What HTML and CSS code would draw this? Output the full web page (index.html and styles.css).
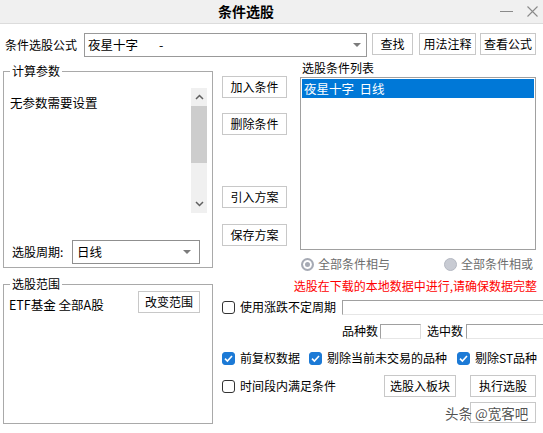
FILE: index.html
```html
<!DOCTYPE html>
<html lang="zh-CN">
<head>
<meta charset="utf-8">
<title>条件选股</title>
<link rel="stylesheet" href="styles.css">
</head>
<body>
<div class="titlebar">
  <span class="title">条件选股</span>
  <div class="tb-ctrls">
    <span class="tb-min"></span>
    <svg class="tb-close" width="11" height="11" viewBox="0 0 11 11"><path d="M0.5 0.5L10.5 10.5M10.5 0.5L0.5 10.5" stroke="#8a8a8a" stroke-width="1.1" fill="none"/></svg>
  </div>
</div>

<div class="toprow">
  <span class="top-label">条件选股公式</span>
  <div class="combo formula">
    <span class="combo-text">夜星十字</span><span class="dash">-</span>
    <span class="arrow"></span>
  </div>
  <button class="btn b-find">查找</button>
  <button class="btn b-note">用法注释</button>
  <button class="btn b-view">查看公式</button>
</div>

<div class="main">
  <div class="leftcol">
    <fieldset class="group g-params">
      <legend>计算参数</legend>
      <div class="params">
        <div class="params-text">无参数需要设置</div>
        <div class="vscroll">
          <span class="sb-btn"><svg width="9" height="6" viewBox="0 0 9 6"><path d="M1 5L4.5 1.5L8 5" stroke="#606060" stroke-width="1.5" fill="none"/></svg></span>
          <span class="sb-thumb"></span>
          <span class="sb-track"></span>
          <span class="sb-btn"><svg width="9" height="6" viewBox="0 0 9 6"><path d="M1 1L4.5 4.5L8 1" stroke="#606060" stroke-width="1.5" fill="none"/></svg></span>
        </div>
      </div>
      <div class="period">
        <span class="period-label">选股周期:</span>
        <div class="combo period-combo">
          <span class="combo-text">日线</span>
          <span class="arrow"></span>
        </div>
      </div>
    </fieldset>

    <fieldset class="group g-range">
      <legend>选股范围</legend>
      <div class="range">
        <span class="range-text">ETF基金 全部A股</span>
        <button class="btn b-range">改变范围</button>
      </div>
    </fieldset>
  </div>

  <div class="rightcol">
    <div class="upper">
      <div class="btncol">
        <button class="btn side b-add">加入条件</button>
        <button class="btn side b-del">删除条件</button>
        <button class="btn side b-imp">引入方案</button>
        <button class="btn side b-save">保存方案</button>
      </div>
      <div class="listcol">
        <div class="list-label">选股条件列表</div>
        <div class="listbox">
          <div class="item sel">夜星十字&nbsp;&nbsp;日线</div>
        </div>
        <div class="radios">
          <label class="radio-opt"><span class="radio on"></span><span>全部条件相与</span></label>
          <label class="radio-opt"><span class="radio"></span><span>全部条件相或</span></label>
        </div>
      </div>
    </div>

    <div class="warn">选股在下载的本地数据中进行,请确保数据完整</div>

    <div class="opt-row">
      <span class="cb"></span><span class="cb-text">使用涨跌不定周期</span>
      <span class="field f-period"></span>
    </div>

    <div class="count-row">
      <span class="lbl">品种数</span><span class="field f-count"></span>
      <span class="lbl lbl-sel">选中数</span><span class="field f-sel"></span>
    </div>

    <div class="check-row">
      <span class="cb on"><svg width="11" height="11" viewBox="0 0 11 11"><path d="M2 5.6L4.4 8L9 3" stroke="#fff" stroke-width="1.6" fill="none"/></svg></span><span class="cb-text">前复权数据</span>
      <span class="cb on c2"><svg width="11" height="11" viewBox="0 0 11 11"><path d="M2 5.6L4.4 8L9 3" stroke="#fff" stroke-width="1.6" fill="none"/></svg></span><span class="cb-text">剔除当前未交易的品种</span>
      <span class="cb on c3"><svg width="11" height="11" viewBox="0 0 11 11"><path d="M2 5.6L4.4 8L9 3" stroke="#fff" stroke-width="1.6" fill="none"/></svg></span><span class="cb-text">剔除ST品种</span>
    </div>

    <div class="action-row">
      <span class="cb"></span><span class="cb-text">时间段内满足条件</span>
      <button class="btn b-block">选股入板块</button>
      <button class="btn b-run">执行选股</button>
    </div>

    <div class="wm-row">
      <button class="btn b-hidden"></button>
      <span class="watermark">头条 @宽客吧</span>
    </div>
  </div>
</div>
</body>
</html>
```

FILE: styles.css
```css
* { box-sizing: border-box; }
html, body { margin: 0; padding: 0; }
body {
  width: 543px;
  height: 433px;
  overflow: hidden;
  background: #fff;
  color: #000;
  font-family: "Noto Sans CJK SC", "Noto Sans", sans-serif;
  font-size: 12px;
  line-height: 16px;
}

/* title bar */
.titlebar {
  height: 24px;
  background: #f0f0f0;
  border-bottom: 1px solid #dcdcdc;
  display: flex;
  align-items: center;
}
.title {
  margin-left: 218px;
  font-size: 14px;
  font-weight: bold;
  line-height: 23px;
}
.tb-ctrls {
  margin-left: auto;
  display: flex;
  align-items: center;
  gap: 14px;
  padding-right: 5px;
}
.tb-min { width: 13px; height: 1px; background: #8a8a8a; }
.tb-close { display: block; }

/* generic controls */
.btn {
  font-family: inherit;
  font-size: 12px;
  color: #000;
  background: #fff;
  border: 1px solid #c8c8c8;
  padding: 0;
  margin: 0;
  height: 22px;
  line-height: 20px;
  text-align: center;
  flex: none;
  white-space: nowrap;
}
.combo {
  display: flex;
  align-items: center;
  border: 1px solid #999;
  background: #fff;
  flex: none;
}
.arrow {
  margin-left: auto;
  width: 0;
  height: 0;
  border-left: 4px solid transparent;
  border-right: 4px solid transparent;
  border-top: 4px solid #7b7b7b;
}

/* top row */
.toprow {
  display: flex;
  align-items: flex-start;
  padding: 9px 0 0 5px;
  height: 36px;
}
.top-label { line-height: 23px; width: 72px; white-space: nowrap; }
.formula {
  margin-left: 7px;
  width: 283px;
  height: 24px;
  padding: 0 5px 0 3px;
  font-size: 12.5px;
}
.dash { margin-left: 21px; }
.b-find { margin-left: 5px; width: 41px; }
.b-note { margin-left: 6px; width: 57px; }
.b-view { margin-left: 4px; width: 56px; }

/* main */
.main {
  display: flex;
  padding-left: 3px;
  gap: 9px;
}
.leftcol { width: 210px; padding-top: 4px; flex: none; }

.group {
  margin: 0;
  padding: 0;
  border: 1px solid #a9a9a9;
  min-width: 0;
  width: 210px;
}
.group legend {
  margin-left: 6px;
  padding: 0 2px;
  font-size: 12px;
  line-height: 14px;
}

.params {
  display: flex;
  margin-top: 10px;
  height: 125px;
}
.params-text { flex: 1; padding: 7px 0 0 6px; font-size: 12.5px; }
.vscroll {
  width: 16px;
  margin-right: 5px;
  background: #f0f0f0;
  display: flex;
  flex-direction: column;
}
.sb-btn {
  height: 18px;
  display: flex;
  align-items: center;
  justify-content: center;
}
.sb-thumb { height: 57px; background: #cdcdcd; }
.sb-track { flex: 1; }

.period {
  display: flex;
  align-items: center;
  margin-top: 27px;
  padding: 0 0 3px 8px;
}
.period-label { width: 60px; white-space: nowrap; }
.period-combo {
  width: 128px;
  height: 24px;
  border-color: #8f8f8f;
  padding: 0 8px 0 4px;
  font-size: 12.5px;
}

.g-range { margin-top: 9px; }
.range {
  display: flex;
  align-items: flex-start;
  height: 132px;
  padding-left: 5px;
}
.range-text { padding-top: 6px; font-size: 12.5px; white-space: nowrap; }
.b-range { margin-left: auto; margin-right: 12px; width: 62px; }

/* right column */
.rightcol { flex: 1; min-width: 0; white-space: nowrap; }
.upper { display: flex; }
.btncol {
  width: 65px;
  display: flex;
  flex-direction: column;
  flex: none;
}
.side { width: 65px; }
.b-add { margin-top: 16px; }
.b-del { margin-top: 15px; }
.b-imp { margin-top: 51px; }
.b-save { margin-top: 16px; }

.listcol { margin-left: 13px; width: 236px; flex: none; }
.list-label { padding-left: 2px; height: 16px; }
.listbox {
  margin-top: 1px;
  height: 173px;
  border: 1px solid #a0a0a0;
  padding: 1px;
}
.item {
  height: 19px;
  line-height: 19px;
  padding-left: 2px;
  font-size: 12.5px;
}
.item.sel { background: #0078d7; color: #fff; }

.radios {
  height: 28px;
  display: flex;
  align-items: center;
  justify-content: space-between;
  padding: 0 3px 0 1px;
  color: #6d6d6d;
}
.radio-opt { display: flex; align-items: center; gap: 4px; }
.radio {
  width: 13px;
  height: 13px;
  border-radius: 50%;
  background: #c8cbd3;
  border: 1px solid #b4b8c2;
}
.radio.on {
  background: #fff;
  border: 2px solid #a6aab4;
  box-shadow: inset 0 0 0 2px #fff, inset 0 0 0 5px #a6aab4;
}

.warn {
  height: 16px;
  text-align: right;
  padding-right: 6px;
  color: #ff0000;
}

.cb {
  width: 13px;
  height: 13px;
  border: 1px solid #333;
  border-radius: 3px;
  background: #fff;
  flex: none;
  display: flex;
  align-items: center;
  justify-content: center;
}
.cb.on { background: #1c7ad6; border-color: #1c7ad6; }
.cb-text { margin-left: 5px; flex: none; }
.lbl { flex: none; }

.opt-row {
  height: 26px;
  display: flex;
  align-items: center;
}
.field {
  flex: none;
  border-top: 1px solid #a0a0a0;
  border-left: 1px solid #a0a0a0;
  border-right: 1px solid #dcdcdc;
  border-bottom: 1px solid #e6e6e6;
  background: #fff;
}
.f-period { margin-left: 6px; width: 220px; height: 15px; }

.count-row {
  height: 22px;
  display: flex;
  align-items: center;
  padding-left: 120px;
}
.f-count { margin-left: 2px; width: 41px; height: 15px; }
.lbl-sel { margin-left: 6px; }
.f-sel { margin-left: 3px; width: 90px; height: 15px; }

.check-row {
  height: 32px;
  display: flex;
  align-items: center;
}
.c2 { margin-left: 9px; }
.c3 { margin-left: 10px; }

.action-row {
  height: 24px;
  display: flex;
  align-items: center;
  padding-right: 7px;
}
.b-block { margin-left: auto; width: 72px; }
.b-run { margin-left: 14px; width: 66px; }

.wm-row {
  position: relative;
  height: 30px;
  display: flex;
  justify-content: flex-end;
  padding-right: 7px;
}
.b-hidden { margin-top: 4px; width: 66px; height: 21px; }
.watermark {
  position: absolute;
  left: 223px;
  top: 6px;
  font-size: 13.5px;
  line-height: 18px;
  color: rgba(50, 50, 50, 0.85);
}
```
